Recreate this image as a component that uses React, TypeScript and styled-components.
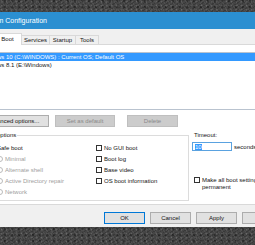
import styled, { createGlobalStyle } from 'styled-components';

const GlobalStyle = createGlobalStyle`
  html, body { margin: 0; padding: 0; }
  body { font-family: 'Liberation Sans', Arial, sans-serif; }
`;

const Desktop = styled.div`
  width: 255px;
  height: 245px;
  overflow: hidden;
  box-sizing: border-box;
  padding-top: 12px;
  background-color: #454545;
  background-image:
    radial-gradient(circle at 30% 40%, rgba(255, 255, 255, 0.14) 0 0.6px, transparent 1.2px),
    radial-gradient(circle at 70% 20%, rgba(0, 0, 0, 0.35) 0 0.8px, transparent 1.5px),
    repeating-linear-gradient(63deg, rgba(255, 255, 255, 0.06) 0 1px, transparent 1px 4px),
    repeating-linear-gradient(-31deg, rgba(0, 0, 0, 0.18) 0 1px, transparent 1px 3px);
  background-size: 5px 4px, 7px 6px, auto, auto;
`;

const Dialog = styled.div`
  margin-left: -50px;
  width: 340px;
  height: 215px;
  background: #f0f0f0;
  display: flex;
  flex-direction: column;
  font-size: 6px;
  color: #141414;
`;

const TitleBar = styled.div`
  height: 17px;
  flex: none;
  display: flex;
  align-items: center;
  padding-left: 30px;
  background: #2b8fd1;
  color: #fff;
  font-size: 7px;
`;

const TabStrip = styled.div`
  height: 15px;
  flex: none;
  display: flex;
  align-items: flex-end;
  padding-left: 19px;
`;

const Tab = styled.div<{ $active?: boolean; $w: number }>`
  width: ${p => p.$w}px;
  height: ${p => (p.$active ? 12 : 9)}px;
  box-sizing: border-box;
  display: flex;
  align-items: center;
  justify-content: center;
  border: 1px solid #d9d9d9;
  border-bottom: none;
  margin-left: -1px;
  background: ${p => (p.$active ? '#fff' : '#f0f0f0')};
  position: relative;
  z-index: ${p => (p.$active ? 1 : 0)};
  margin-bottom: ${p => (p.$active ? '-1px' : '0')};
  padding-bottom: ${p => (p.$active ? '1px' : '0')};
`;

const Page = styled.div`
  margin: 0 6px 0 20px;
  height: 161px;
  flex: none;
  box-sizing: border-box;
  background: #fff;
  border: 1px solid #d9d9d9;
  padding: 7px 6px 0 6px;
  display: flex;
  flex-direction: column;
`;

const ListBox = styled.div`
  height: 58px;
  box-sizing: border-box;
  border: 1px solid #b9c3cf;
  background: #fff;
`;

const ListRow = styled.div<{ $selected?: boolean }>`
  height: 8px;
  line-height: 8px;
  padding-left: 2px;
  white-space: nowrap;
  background: ${p => (p.$selected ? '#3399ff' : 'transparent')};
  color: ${p => (p.$selected ? '#fff' : '#141414')};
`;

const ButtonRow = styled.div`
  display: flex;
  margin-top: 5px;
`;

const Button = styled.div<{ $w: number; $gap?: number; $disabled?: boolean; $default?: boolean }>`
  width: ${p => p.$w}px;
  height: 12px;
  margin-left: ${p => p.$gap ?? 0}px;
  box-sizing: border-box;
  display: flex;
  align-items: center;
  justify-content: center;
  white-space: nowrap;
  background: ${p => (p.$disabled ? '#cccccc' : '#e1e1e1')};
  border: 1px solid ${p => (p.$default ? '#0078d7' : p.$disabled ? '#bfbfbf' : '#adadad')};
  color: ${p => (p.$disabled ? '#8a8a8a' : '#141414')};
`;

const OptionsArea = styled.div`
  display: flex;
  margin-top: 8px;
`;

const GroupBox = styled.div`
  width: 212px;
  height: 66px;
  box-sizing: border-box;
  border: 1px solid #dcdcdc;
  position: relative;
  display: flex;
  padding-top: 6px;
`;

const Legend = styled.span`
  position: absolute;
  top: -4px;
  left: 4px;
  padding: 0 1px;
  line-height: 7px;
  background: #fff;
`;

const Column = styled.div<{ $w?: number; $pl?: number }>`
  display: flex;
  flex-direction: column;
  width: ${p => (p.$w ? `${p.$w}px` : 'auto')};
  padding-left: ${p => p.$pl ?? 0}px;
  box-sizing: border-box;
`;

const OptionRow = styled.div<{ $indent?: number; $disabled?: boolean }>`
  height: 11px;
  display: flex;
  align-items: center;
  gap: 2px;
  padding-left: ${p => p.$indent ?? 0}px;
  white-space: nowrap;
  color: ${p => (p.$disabled ? '#a0a0a0' : '#141414')};
`;

const CheckBox = styled.span`
  width: 6px;
  height: 6px;
  flex: none;
  box-sizing: border-box;
  border: 1px solid #333;
  background: #fff;
`;

const Radio = styled.span`
  width: 6px;
  height: 6px;
  flex: none;
  box-sizing: border-box;
  border: 1px solid #bcbcbc;
  border-radius: 50%;
  background: #fff;
`;

const SidePanel = styled.div`
  display: flex;
  flex-direction: column;
  margin: -3px 0 0 3px;
`;

const Label = styled.div`
  line-height: 7px;
  padding-left: 2px;
`;

const TimeoutRow = styled.div`
  display: flex;
  align-items: center;
  margin-top: 3px;
  gap: 2px;
`;

const TimeoutInput = styled.div`
  width: 40px;
  height: 9px;
  box-sizing: border-box;
  border: 1px solid #5aa2e0;
  display: flex;
  align-items: center;
  padding-left: 2px;
`;

const Selected = styled.span`
  background: #3399ff;
  color: #fff;
  line-height: 6px;
`;

const PermanentRow = styled.div`
  display: flex;
  align-items: flex-start;
  gap: 2px;
  margin: 26px 0 0 2px;
`;

const Wrapped = styled.div`
  width: 66px;
  line-height: 7px;
  margin-top: -0.5px;
`;

const Footer = styled.div`
  height: 22px;
  flex: none;
  display: flex;
  justify-content: flex-end;
  align-items: flex-start;
  gap: 5px;
  padding: 7px 7px 0 0;
  box-sizing: border-box;
`;

export default function App() {
  return (
    <Desktop>
      <GlobalStyle />
      <Dialog>
        <TitleBar>System Configuration</TitleBar>
        <TabStrip>
          <Tab $w={26}>General</Tab>
          <Tab $w={29} $active>Boot</Tab>
          <Tab $w={29}>Services</Tab>
          <Tab $w={27}>Startup</Tab>
          <Tab $w={24}>Tools</Tab>
        </TabStrip>
        <Page>
          <ListBox>
            <ListRow $selected>Windows 10 (C:\WINDOWS) : Current OS; Default OS</ListRow>
            <ListRow>Windows 8.1 (E:\Windows)</ListRow>
          </ListBox>
          <ButtonRow>
            <Button $w={72}>Advanced options...</Button>
            <Button $w={60} $gap={6} $disabled>Set as default</Button>
            <Button $w={51} $gap={12} $disabled>Delete</Button>
          </ButtonRow>
          <OptionsArea>
            <GroupBox>
              <Legend>Boot options</Legend>
              <Column $w={118} $pl={11}>
                <OptionRow><CheckBox />Safe boot</OptionRow>
                <OptionRow $indent={8} $disabled><Radio />Minimal</OptionRow>
                <OptionRow $indent={8} $disabled><Radio />Alternate shell</OptionRow>
                <OptionRow $indent={8} $disabled><Radio />Active Directory repair</OptionRow>
                <OptionRow $indent={8} $disabled><Radio />Network</OptionRow>
              </Column>
              <Column>
                <OptionRow><CheckBox />No GUI boot</OptionRow>
                <OptionRow><CheckBox />Boot log</OptionRow>
                <OptionRow><CheckBox />Base video</OptionRow>
                <OptionRow><CheckBox />OS boot information</OptionRow>
              </Column>
            </GroupBox>
            <SidePanel>
              <Label>Timeout:</Label>
              <TimeoutRow>
                <TimeoutInput><Selected>10</Selected></TimeoutInput>
                <span>seconds</span>
              </TimeoutRow>
              <PermanentRow>
                <CheckBox />
                <Wrapped>Make all boot settings permanent</Wrapped>
              </PermanentRow>
            </SidePanel>
          </OptionsArea>
        </Page>
        <Footer>
          <Button $w={41} $default>OK</Button>
          <Button $w={41}>Cancel</Button>
          <Button $w={41}>Apply</Button>
          <Button $w={41}>Help</Button>
        </Footer>
      </Dialog>
    </Desktop>
  );
}
